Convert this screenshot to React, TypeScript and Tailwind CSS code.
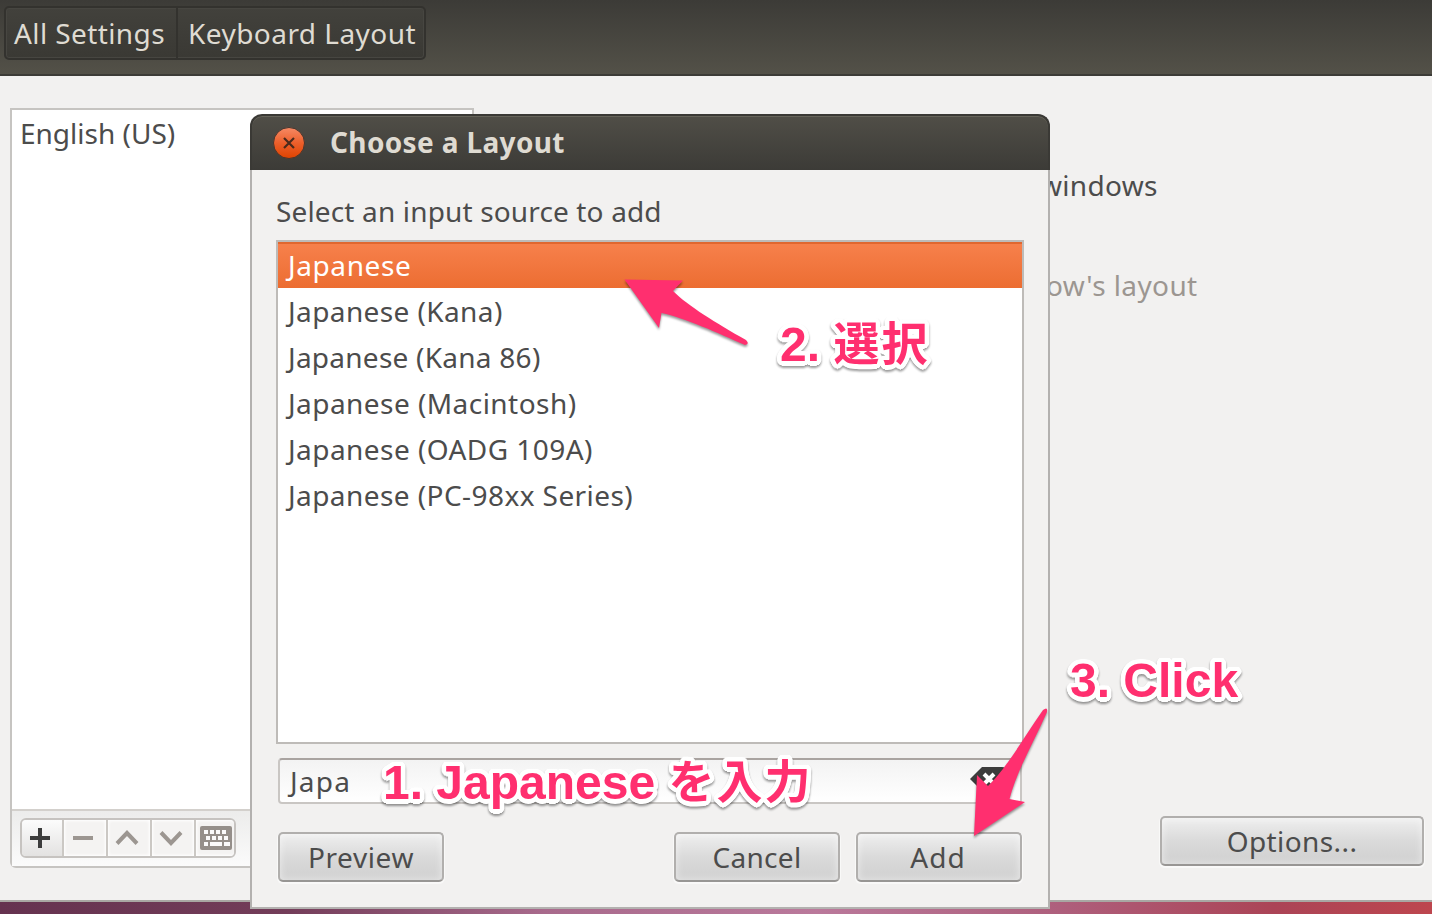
import React from "react";

const layouts = [
  { name: "Japanese", fit: "tracking-[0.6px]" },
  { name: "Japanese (Kana)", fit: "tracking-[0.4px]" },
  { name: "Japanese (Kana 86)", fit: "tracking-[0.25px]" },
  { name: "Japanese (Macintosh)", fit: "tracking-[0.45px]" },
  { name: "Japanese (OADG 109A)", fit: "tracking-[0.45px]" },
  { name: "Japanese (PC-98xx Series)", fit: "tracking-[0.43px]" },
];

// A round white halo: shadows set on a circle around each glyph.
const halo = Array.from({ length: 24 }, (_, i) => {
  const angle = (i / 24) * Math.PI * 2;
  return `${(Math.cos(angle) * 4.5).toFixed(2)}px ${(Math.sin(angle) * 4.5).toFixed(2)}px 0 #fff`;
}).join(", ");

function PushButton({ label, className = "" }: { label: string; className?: string }) {
  return (
    <button
      className={`h-[50px] rounded-[5px] border-2 border-[#b1afad] border-b-[#989694] bg-linear-to-b from-[#efefef] via-[#dadada] via-50% to-[#d0d0d0] pb-px text-center leading-[46px] text-[#4c4c4c] shadow-[inset_0_0_7px_1px_rgba(255,255,255,0.45),0_1px_1px_1px_rgba(255,255,255,0.6)] ${className}`}
    >
      {label}
    </button>
  );
}

function ToolButton({ children, active = false }: { children: React.ReactNode; active?: boolean }) {
  return (
    <button
      className={`flex h-full w-[44px] shrink-0 items-center justify-center border-r-2 border-[#cbc8c4] pr-[4px] first:w-[42px] last:w-[40px] last:border-r-0 last:pr-0 ${
        active ? "bg-linear-to-b from-[#fcfcfc] to-[#e3e2e1] shadow-[0_1px_0_#a7a29d]" : "bg-[#f4f3f2] shadow-[inset_0_0_3px_1px_#fff]"
      }`}
    >
      {children}
    </button>
  );
}

function Callout({ children, className = "" }: { children: React.ReactNode; className?: string }) {
  return (
    <div
      style={{ textShadow: halo }}
      className={`absolute font-['Liberation_Sans','Noto_Sans_CJK_JP',sans-serif] text-[48px] leading-[48px] font-bold whitespace-pre text-[#ff2f6f] drop-shadow-[0_2px_1px_rgba(0,0,0,0.4)] ${className}`}
    >
      {children}
    </div>
  );
}

export default function App() {
  return (
    <div className="relative flex h-[914px] w-[1432px] flex-col overflow-hidden bg-[linear-gradient(to_right,#65324f_0%,#733d59_20%,#a86a8c_38%,#ba799b_57%,#ae5f7c_74%,#ab4456_89%,#bd464e_100%)] font-['Noto_Sans','Noto_Sans_CJK_JP',sans-serif] text-[28px] text-[#4c4c4c]">
      <main className="flex h-[902px] flex-col border-b-2 border-[#a9a7a3] bg-[#f2f1f0]">
        <header className="h-[76px] shrink-0 border-b-2 border-[#3c3b37] bg-linear-to-b from-[#3c3b37] to-[#535148] pt-[6px] pl-1">
          <nav className="flex h-[54px] w-[422px] rounded-[5px] border-2 border-[#33322e] bg-linear-to-b from-[#42413c] to-[#3a3934] leading-[50px] whitespace-nowrap text-[#dfdbd2] shadow-[inset_0_0_0_1px_#474641]">
            <span className="w-[172px] border-r-2 border-[#33322e] pl-[8px] tracking-[0.4px]">All Settings</span>
            <span className="pl-[10px] tracking-[0.45px]">Keyboard Layout</span>
          </nav>
        </header>

        <div className="flex flex-1 items-start justify-between pt-8 pr-2 pl-[10px]">
          <section className="flex h-[760px] w-[464px] flex-col rounded-b-[6px] border-2 border-[#c6c4c1]">
            <div className="flex-1 bg-white pl-[8px] leading-[46px]">English (US)</div>
            <div className="h-[57px] border-t-2 border-[#d3d0cc] bg-linear-to-b from-[#ececeb] to-[#fbfbfb] pt-[7px] pl-2">
              <div className="flex h-[40px] w-[216px] overflow-hidden rounded-[6px] border-2 border-[#c6c3c0]">
                <ToolButton active>
                  <svg width="20" height="20" viewBox="0 0 20 20"><path d="M10 0v20M0 10h20" stroke="#3c3c3c" strokeWidth="4" /></svg>
                </ToolButton>
                <ToolButton>
                  <svg width="20" height="20" viewBox="0 0 20 20"><path d="M0 10h20" stroke="#9c9691" strokeWidth="4" /></svg>
                </ToolButton>
                <ToolButton>
                  <svg width="24" height="16" viewBox="0 0 24 16"><path d="M2 13.5 12 3l10 10.500" fill="none" stroke="#9c9691" strokeWidth="4" /></svg>
                </ToolButton>
                <ToolButton>
                  <svg width="24" height="16" viewBox="0 0 24 16"><path d="M2 2.500 12 13l10-10.500" fill="none" stroke="#9c9691" strokeWidth="4" /></svg>
                </ToolButton>
                <ToolButton>
                  <svg width="32" height="24" viewBox="0 0 32 24">
                    <rect width="32" height="24" rx="2" fill="#958f8a" />
                    <path
                      d="M4 4h4v4H4zM10 4h4v4h-4zM16 4h4v4h-4zM22 4h4v4h-4zM6 10h4v4H6zM12 10h4v4h-4zM18 10h4v4h-4zM24 10h4v4h-4zM4 16h4v4H4zM10 16h12v4H10zM24 16h6v4h-6z"
                      fill="#fafafa"
                    />
                  </svg>
                </ToolButton>
              </div>
            </div>
          </section>

          <section className="flex h-[758px] w-[384px] flex-col pt-[52px]">
            <p className="h-[50px] leading-[50px] whitespace-nowrap tracking-[0.3px]">windows</p>
            <p className="mt-[50px] h-[50px] pl-[6px] leading-[50px] whitespace-nowrap tracking-[0.4px] text-[#9c9691]">ow's layout</p>
            <PushButton label="Options..." className="mt-auto w-[264px] self-end tracking-[0.4px]" />
          </section>
        </div>
      </main>

      <section className="absolute top-[114px] left-[250px] flex h-[795px] w-[800px] flex-col">
        <header className="flex h-14 shrink-0 items-center rounded-t-[12px] border-2 border-b-0 border-[#3a3935] bg-linear-to-b from-[#504e47] to-[#3c3b37] pl-[21px] shadow-[inset_0_1px_0_#66645a]">
          <svg width="32" height="32" viewBox="0 0 32 32">
            <defs>
              <linearGradient id="close" x1="0" y1="0" x2="0" y2="1">
                <stop offset="0" stopColor="#f68a65" />
                <stop offset="0.5" stopColor="#ec5f2b" />
                <stop offset="1" stopColor="#df4300" />
              </linearGradient>
            </defs>
            <circle cx="16" cy="16" r="15.500" fill="url(#close)" stroke="#45362f" />
            <path d="m11 11 10 10M21 11 11 21" stroke="#4b2a1c" strokeWidth="2.200" />
          </svg>
          <h1 className="pb-[3px] pl-[25px] text-[28px] font-bold tracking-[0.35px] whitespace-nowrap text-[#dfdbd2]">Choose a Layout</h1>
        </header>

        <div className="flex flex-1 flex-col border-2 border-t-0 border-[#b3b1af] bg-[#f2f1f0] px-[24px] pt-[16px]">
          <p className="h-[54px] leading-[50px] tracking-[0.15px] whitespace-nowrap">Select an input source to add</p>
          <ul className="h-[504px] border-2 border-[#bebbb8] bg-white">
            {layouts.map((item, i) => (
              <li
                key={item.name}
                className={`h-[46px] pl-[10px] leading-[46px] whitespace-nowrap ${item.fit} ${
                  i === 0 ? "bg-linear-to-b from-[#f7814c] to-[#ec6d31] text-white shadow-[inset_0_2px_0_#e0672f]" : ""
                }`}
              >
                {item.name}
              </li>
            ))}
          </ul>
          <div className="mx-[2px] mt-[14px] flex h-[46px] items-center justify-between rounded-[4px] border-2 border-[#c9c6c3] border-t-[#a9a3a0] bg-linear-to-b from-[#f3f3f3] to-white pr-[14px] pl-[10px] leading-[42px]">
            <span className="tracking-[1.2px]">Japa</span>
            <svg width="36" height="24" viewBox="0 0 36 24" className="mb-1">
              <path d="m0 12 12-12h20q4 0 4 4v16q0 4-4 4H12z" fill="#3c3c3c" />
              <path d="m14 7 10 10M24 7 14 17" stroke="#fff" strokeWidth="4" />
            </svg>
          </div>
          <div className="mt-7 flex gap-4 px-[2px]">
            <PushButton label="Preview" className="mr-auto w-[166px] tracking-[0.6px]" />
            <PushButton label="Cancel" className="w-[166px] tracking-[0.3px]" />
            <PushButton label="Add" className="w-[166px] pr-[2px] tracking-[1px]" />
          </div>
        </div>
      </section>

      <Callout className="top-[321px] left-[780px]">
        2. <span className="relative -top-px text-[46px] tracking-[2px]">選択</span>
      </Callout>
      <Callout className="top-[759px] left-[383px]">
        1. Japanese <span className="relative -top-px text-[46px] tracking-[2px]">を入力</span>
      </Callout>
      <Callout className="top-[657px] left-[1070px]">3. Click</Callout>

      <svg className="absolute top-[270px] left-[615px] drop-shadow-[0_2px_1px_rgba(0,0,0,0.4)]" width="145" height="85" viewBox="615 270 145 85">
        <path d="M624.500 279.500 683 280.500 673 291C688 306 716 323 746 340Q750 344 745 345C718 333 685 318 661.500 313L659 328Z" fill="#ff2f6f" />
      </svg>
      <svg className="absolute top-[700px] left-[965px] drop-shadow-[0_2px_1px_rgba(0,0,0,0.4)]" width="90" height="145" viewBox="965 700 90 145">
        <path d="M974 836 977 775 988 786C1006 769 1024 737 1043 710Q1048 706 1047 712C1034 742 1017 770 1009.500 799L1025 802Z" fill="#ff2f6f" />
      </svg>
    </div>
  );
}
